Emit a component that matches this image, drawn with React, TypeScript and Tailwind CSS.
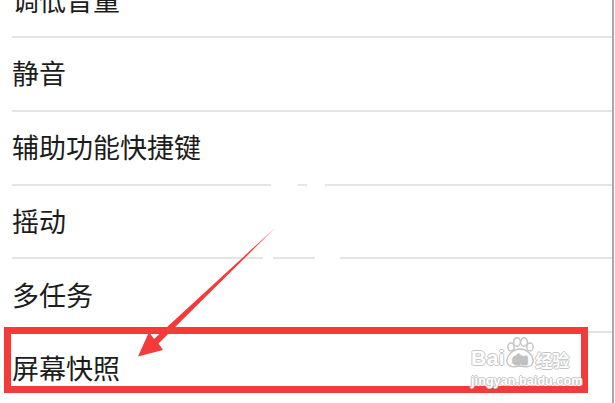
import React from "react";

const items = ["调低音量", "静音", "辅助功能快捷键", "摇动", "多任务", "屏幕快照"];

function Paw() {
  return (
    <svg width="30" height="32" viewBox="0 0 30 32" className="shrink-0">
      <g fill="#ffffff" stroke="#c4c4c4" strokeWidth="1.4">
        <ellipse cx="6" cy="10" rx="3.2" ry="4" />
        <ellipse cx="12" cy="5" rx="3.4" ry="4.2" />
        <ellipse cx="19" cy="5" rx="3.4" ry="4.2" />
        <ellipse cx="25" cy="10" rx="3.2" ry="4" />
        <path d="M15 12 C 22 12, 29 19, 28 25 C 27 31, 20 30, 15 29 C 10 30, 3 31, 2 25 C 1 19, 8 12, 15 12 Z" />
      </g>
      <text
        x="15"
        y="27"
        textAnchor="middle"
        fontFamily="Liberation Sans, sans-serif"
        fontWeight="700"
        fontSize="12"
        fill="#ffffff"
        stroke="#bdbdbd"
        strokeWidth="0.8"
      >
        du
      </text>
    </svg>
  );
}

export default function App() {
  return (
    <div className="relative w-[615px] h-[403px] overflow-hidden bg-white flex font-['Noto_Sans_CJK_SC',sans-serif]">
      <div className="flex-1 pl-[12px] flex flex-col -mt-[35.75px]">
        {items.map((t) => (
          <div
            key={t}
            className="h-[73.75px] shrink-0 border-b-2 border-[#e4e4e4] flex items-center pb-[2px] text-[27px] leading-none text-[#1c1c1c]"
          >
            {t}
          </div>
        ))}
      </div>
      <div className="w-[2px] h-full bg-[#a9a9a9]" />
      <div className="w-[1px] h-full bg-white" />

      {/* erased gaps in separators */}
      <div className="absolute left-[271px] top-[182px] w-[27px] h-[4px] bg-white" />
      <div className="absolute left-[307px] top-[182px] w-[18px] h-[4px] bg-white" />
      <div className="absolute left-[263px] top-[256px] w-[10px] h-[4px] bg-white" />
      <div className="absolute left-[315px] top-[256px] w-[25px] h-[4px] bg-white" />

      {/* red highlight box */}
      <div className="absolute left-[4px] top-[327px] w-[584px] h-[66px] border-[7px] border-[#f53a3a]" />

      {/* watermark */}
      <div className="absolute left-[471px] top-[337px] flex flex-col items-start font-['Liberation_Sans',sans-serif] font-bold text-white [text-shadow:1px_0_0_#c6c6c6,-1px_0_0_#c6c6c6,0_1px_0_#c6c6c6,0_-1px_0_#c6c6c6]">
        <div className="flex items-end h-[32px]">
          <span className="text-[21px] leading-none tracking-[0.5px] mb-[1px]">Bai</span>
          <Paw />
          <span className="text-[17px] leading-none mb-[1px] font-['Noto_Sans_CJK_SC',sans-serif] font-bold">经验</span>
        </div>
        <span className="text-[12.5px] leading-none mt-[6px] tracking-[0.1px]">jingyan.baidu.com</span>
      </div>

      {/* arrow */}
      <svg className="absolute inset-0" width="615" height="403" viewBox="0 0 615 403">
        <polygon
          points="138,356.5 149,332 154,339 276,227 158.5,343.5 163,350"
          fill="#f53a3a"
        />
      </svg>
    </div>
  );
}
